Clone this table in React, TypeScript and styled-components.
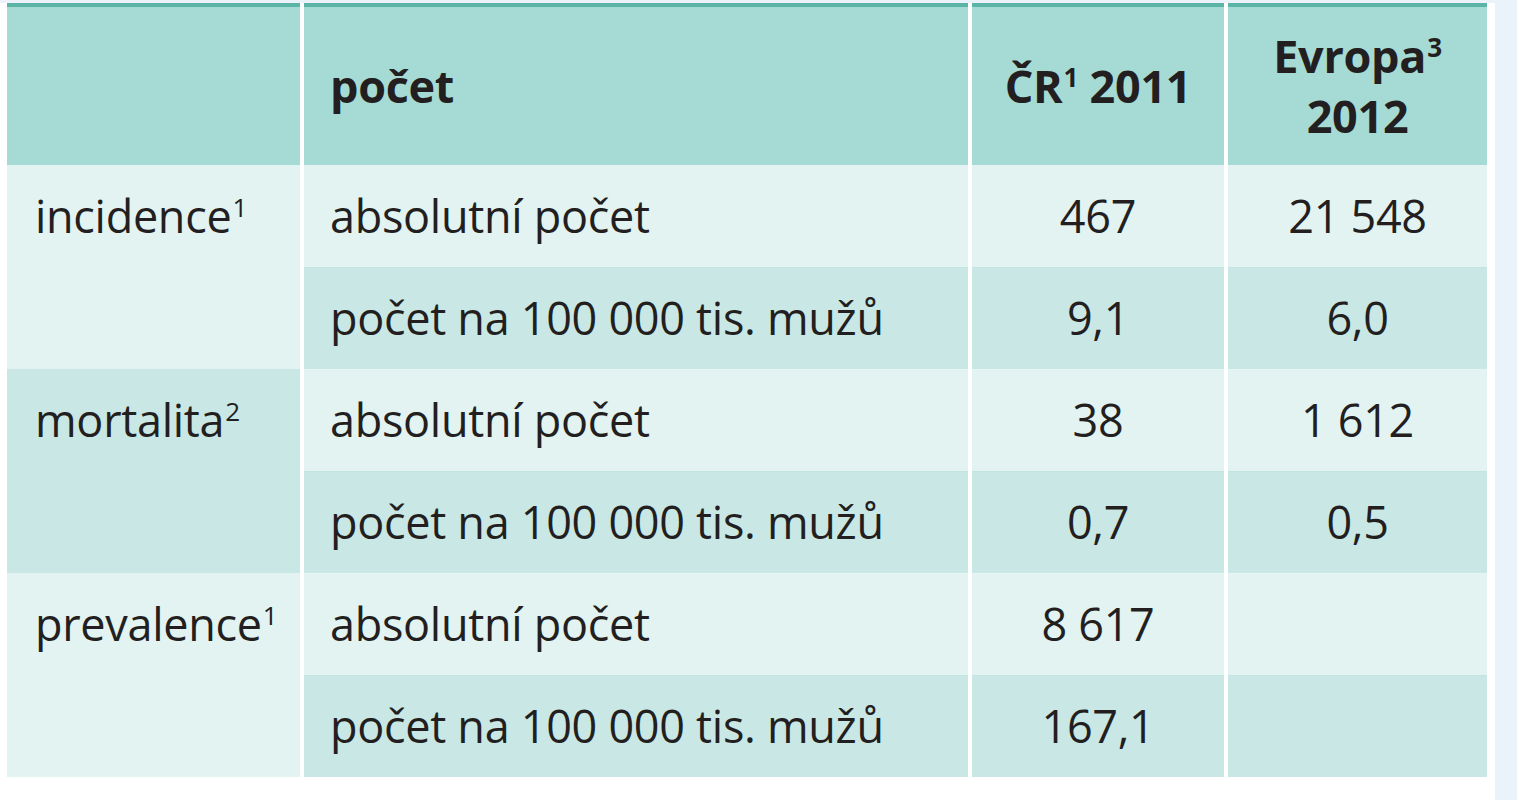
import React from "react";
import styled, { createGlobalStyle } from "styled-components";

const GlobalStyle = createGlobalStyle`
  html, body {
    margin: 0;
    padding: 0;
    background: #ffffff;
  }
  body {
    font-family: "Open Sans", "Noto Sans", "Liberation Sans", sans-serif;
    color: #231f20;
  }
`;

const Page = styled.div`
  display: flex;
  width: 1517px;
  height: 800px;
  overflow: hidden;
  background: #ffffff;
`;

const Main = styled.div`
  flex: 1;
  display: flex;
  flex-direction: column;
  border-top: 3px solid #edf2fa;
  padding-left: 7px;
`;

const SideStrip = styled.div`
  width: 22px;
  background: #eaf2fa;
`;

const Table = styled.div`
  display: grid;
  grid-template-columns: 293px 664px 252px 259px;
  grid-template-rows: 162px repeat(6, 102px);
  column-gap: 4px;
  width: 1480px;
  background: #ffffff;
`;

const HeadCell = styled.div<{ $align?: "left" | "center" }>`
  border-top: 4px solid #5bb4a5;
  background: #a6dbd5;
  display: flex;
  flex-direction: column;
  justify-content: center;
  align-items: ${(p) => (p.$align === "center" ? "center" : "flex-start")};
  text-align: ${(p) => p.$align ?? "left"};
  padding-left: ${(p) => (p.$align === "center" ? "0" : "26px")};
  font-size: 45px;
  font-weight: 700;
  letter-spacing: -0.3px;
  line-height: 60px;
  color: #231f20;
`;

const GroupCell = styled.div<{ $dark?: boolean }>`
  grid-row: span 2;
  background: ${(p) => (p.$dark ? "#c9e8e5" : "#e2f3f2")};
  padding-left: 28px;
  font-size: 45px;
  letter-spacing: -0.3px;
  line-height: 102px;
  color: #231f20;
`;

const Cell = styled.div<{ $dark?: boolean; $center?: boolean }>`
  background: ${(p) => (p.$dark ? "#c9e8e5" : "#e2f3f2")};
  border-top: 1px solid ${(p) => (p.$dark ? "#c3e5e1" : "#e6f5f4")};
  text-align: ${(p) => (p.$center ? "center" : "left")};
  padding-left: ${(p) => (p.$center ? "0" : "26px")};
  font-size: 45px;
  letter-spacing: -0.3px;
  line-height: 100px;
  color: #231f20;
  white-space: nowrap;
`;

const Sup = styled.sup`
  font-size: 0.58em;
  line-height: 0;
  vertical-align: 0.6em;
  margin-left: 1px;
`;

type Row = {
  label: string;
  cr: string;
  eu: string;
};

type Group = {
  name: string;
  note: string;
  dark: boolean;
  rows: Row[];
};

const groups: Group[] = [
  {
    name: "incidence",
    note: "1",
    dark: false,
    rows: [
      { label: "absolutní počet", cr: "467", eu: "21 548" },
      { label: "počet na 100 000 tis. mužů", cr: "9,1", eu: "6,0" },
    ],
  },
  {
    name: "mortalita",
    note: "2",
    dark: true,
    rows: [
      { label: "absolutní počet", cr: "38", eu: "1 612" },
      { label: "počet na 100 000 tis. mužů", cr: "0,7", eu: "0,5" },
    ],
  },
  {
    name: "prevalence",
    note: "1",
    dark: false,
    rows: [
      { label: "absolutní počet", cr: "8 617", eu: "" },
      { label: "počet na 100 000 tis. mužů", cr: "167,1", eu: "" },
    ],
  },
];

export default function App() {
  return (
    <>
      <GlobalStyle />
      <Page>
        <Main>
          <Table>
            <HeadCell />
            <HeadCell>počet</HeadCell>
            <HeadCell $align="center">
              <span>
                ČR<Sup>1</Sup> 2011
              </span>
            </HeadCell>
            <HeadCell $align="center">
              <span>
                Evropa<Sup>3</Sup>
              </span>
              <span>2012</span>
            </HeadCell>
            {groups.map((g) => (
              <React.Fragment key={g.name}>
                <GroupCell $dark={g.dark}>
                  {g.name}
                  <Sup>{g.note}</Sup>
                </GroupCell>
                {g.rows.map((r, i) => {
                  const dark = i % 2 === 1;
                  return (
                    <React.Fragment key={r.label}>
                      <Cell $dark={dark}>{r.label}</Cell>
                      <Cell $dark={dark} $center>
                        {r.cr}
                      </Cell>
                      <Cell $dark={dark} $center>
                        {r.eu}
                      </Cell>
                    </React.Fragment>
                  );
                })}
              </React.Fragment>
            ))}
          </Table>
        </Main>
        <SideStrip />
      </Page>
    </>
  );
}
